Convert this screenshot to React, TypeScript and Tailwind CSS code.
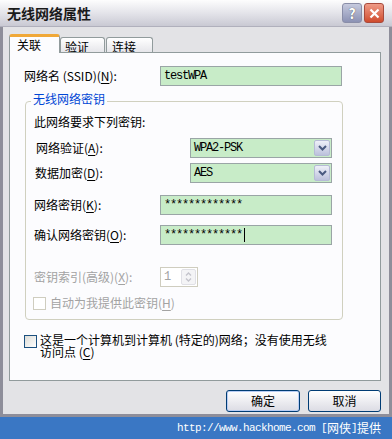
import React from "react";

const cjk = "[font-family:'Noto_Sans_CJK_SC',sans-serif]";
const mono = "[font-family:'Liberation_Mono','Noto_Sans_CJK_SC',monospace] text-[12px] tracking-[-1.2px]";

const Acc = ({ c }: { c: string }) => <span className="underline underline-offset-2">{c}</span>;

const Select = ({ value }: { value: string }) => (
	<div className="flex h-[20px] w-[142px] items-center border border-[#9aa5a6] bg-[#c8ecc8]">
		<span className={`${mono} flex-1 pl-[3px] text-black`}>{value}</span>
		<div className="mr-[1px] flex h-[16px] w-[16px] items-center justify-center rounded-[2px] border border-[#b6bbd6] bg-linear-to-b from-[#eef0f8] to-[#bcc1dc]">
			<svg width="9" height="6" viewBox="0 0 9 6">
				<path d="M1 1l3.5 3.5L8 1" stroke="#4a5a80" strokeWidth="2" fill="none" />
			</svg>
		</div>
	</div>
);

const Field = ({ w, children }: { w: string; children?: React.ReactNode }) => (
	<div className={`flex h-[20px] ${w} items-center border border-[#9aa5a6] bg-[#c8ecc8] pl-[3px]`}>
		<span className={`${mono} text-black`}>{children}</span>
	</div>
);

const Check = ({ disabled }: { disabled?: boolean }) => (
	<div
		className={
			disabled
				? "h-[13px] w-[13px] shrink-0 border border-[#cfcdbf] bg-white"
				: "h-[13px] w-[13px] shrink-0 border border-[#1c5180] bg-linear-to-br from-[#dcdcd7] to-white"
		}
	/>
);

export default function App() {
	return (
		<div className={`flex h-[439px] w-[392px] flex-col bg-[#e3e3e6] text-[12px] leading-[16px] text-black ${cjk}`}>
			<div className="flex h-[417px] flex-col">
				{/* title bar */}
				<div className="flex h-[27px] items-center border-b border-[#b0b0bc] bg-linear-to-b from-[#fdfdfd] via-[#e4e4ea] to-[#c9c9d3] pl-[7px] pr-[8px]">
					<span className="flex-1 text-[14px] font-bold text-[#1a1a1a]">无线网络属性</span>
					<div className="flex h-[20px] w-[20px] items-center justify-center rounded-[3px] border border-[#8a8ea8] bg-linear-to-b from-[#c6cade] to-[#8c92b4] text-[14px] font-bold text-white [text-shadow:0_0_1px_#333]">
						?
					</div>
					<div className="ml-[2px] flex h-[20px] w-[20px] items-center justify-center rounded-[3px] border border-[#a84a3c] bg-linear-to-b from-[#ee9a86] to-[#cf4a2c]">
						<svg width="11" height="11" viewBox="0 0 11 11">
							<path d="M1.5 1.5l8 8M9.5 1.5l-8 8" stroke="white" strokeWidth="2.2" />
						</svg>
					</div>
				</div>

				<div className="flex flex-1 flex-col border-x-[3px] border-b-[3px] border-[#8e8e9a] pt-[7px]">
					{/* tabs */}
					<div className="flex h-[18px] items-end pl-[6px]">
						<div className="relative z-10 -mb-px flex h-[19px] w-[51px] items-center rounded-t-[3px] border-x border-t-[3px] border-x-[#919b9c] border-t-[#f0a838] bg-[#fcfcfe] pl-[7px]">
							关联
						</div>
						<div className="flex h-[15px] w-[45px] items-center rounded-t-[3px] border-x border-t border-[#919b9c] bg-linear-to-b from-white to-[#e6e6ea] pl-[4px] pt-[3px]">
							验证
						</div>
						<div className="ml-[1px] flex h-[15px] w-[47px] items-center rounded-t-[3px] border-x border-t border-[#919b9c] bg-linear-to-b from-white to-[#e6e6ea] pl-[5px] pt-[3px]">
							连接
						</div>
					</div>

					{/* panel */}
					<div className="ml-[6px] mr-[8px] flex h-[329px] flex-col border border-[#919b9c] bg-[#fcfcfe] pl-[14px]">
						<div className="mt-[13px] flex h-[20px] items-center">
							<span className="w-[136px]">
								网络名 (SSID)(<Acc c="N" />):
							</span>
							<Field w="w-[182px]">testWPA</Field>
						</div>

						<div className="relative ml-[1px] mt-[15px] w-[318px] rounded-[4px] border border-[#d0d0bf] pb-[9px] pl-[8px]">
							<span className="absolute left-[5px] top-[-11px] bg-[#fcfcfe] px-[2px] text-[#0046d5]">无线网络密钥</span>
							<div className="mt-[12px] h-[16px]">此网络要求下列密钥:</div>
							<div className="mt-[8px] flex h-[20px] items-center">
								<span className="w-[156px] pl-[2px]">
									网络验证(<Acc c="A" />):
								</span>
								<Select value="WPA2-PSK" />
							</div>
							<div className="mt-[5px] flex h-[20px] items-center">
								<span className="w-[156px] pl-[1px]">
									数据加密(<Acc c="D" />):
								</span>
								<Select value="AES" />
							</div>
							<div className="mt-[12px] flex h-[20px] items-center">
								<span className="w-[126px]">
									网络密钥(<Acc c="K" />):
								</span>
								<Field w="w-[172px]">*************</Field>
							</div>
							<div className="mt-[10px] flex h-[20px] items-center">
								<span className="w-[126px]">
									确认网络密钥(<Acc c="O" />):
								</span>
								<div className="flex h-[20px] w-[172px] items-center border border-[#9aa5a6] bg-[#c8ecc8] pl-[3px]">
									<span className={mono}>*************</span>
									<span className="ml-[2px] h-[14px] w-px bg-black" />
								</div>
							</div>
							<div className="mt-[22px] flex h-[20px] items-center text-[#a3a3a3]">
								<span className="w-[126px]">
									密钥索引(高级)(<Acc c="X" />):
								</span>
								<div className="flex h-[20px] w-[38px] items-center border border-[#cfcdbf] bg-white pl-[3px]">
									<span className={`${mono} flex-1`}>1</span>
									<div className="mr-[1px] flex h-[16px] w-[15px] flex-col items-center justify-center gap-[2px] rounded-[2px] border border-[#e0e0e6] bg-[#f4f4f6]">
										<svg width="7" height="4" viewBox="0 0 7 4">
											<path d="M1 3.5l2.5-2.5L6 3.5" stroke="#c4c4cc" strokeWidth="1.4" fill="none" />
										</svg>
										<svg width="7" height="4" viewBox="0 0 7 4">
											<path d="M1 0.5l2.5 2.5L6 0.5" stroke="#c4c4cc" strokeWidth="1.4" fill="none" />
										</svg>
									</div>
								</div>
							</div>
							<div className="-ml-[1px] mt-[9px] flex h-[14px] items-center gap-[4px] text-[#a3a3a3]">
								<Check disabled />
								<span>
									自动为我提供此密钥(<Acc c="H" />)
								</span>
							</div>
						</div>

						<div className="mt-[15px] flex items-start gap-[3px]">
							<Check />
							<div className="-mt-[1px] flex flex-col whitespace-nowrap">
								<div className="h-[12px] leading-[12px]">这是一个计算机到计算机 (特定的)网络；没有使用无线</div>
								<div className="h-[12px] leading-[12px]">
									访问点 (<Acc c="C" />)
								</div>
							</div>
						</div>
					</div>

					{/* buttons */}
					<div className="mt-[9px] flex justify-end gap-[8px] pr-[8px]">
						<button className="flex h-[22px] w-[74px] items-center justify-center rounded-[3px] border border-[#003c74] bg-linear-to-b from-white to-[#dcdce4] shadow-[inset_0_0_0_1px_#b8cdf4]">
							确定
						</button>
						<button className="flex h-[22px] w-[73px] items-center justify-center rounded-[3px] border border-[#003c74] bg-linear-to-b from-white to-[#dcdce4]">
							取消
						</button>
					</div>
				</div>
			</div>

			{/* footer */}
			<div className="flex h-[22px] items-center justify-end bg-[#3a77c4] pr-[11px] text-white">
				<span className="[font-family:'Liberation_Mono',monospace] text-[11px] tracking-[-0.6px]">http://www.hackhome.com [</span>
				<span className="text-[12px]">网侠</span>
				<span className="[font-family:'Liberation_Mono',monospace] text-[11px] tracking-[-0.6px]">]</span>
				<span className="text-[12px]">提供</span>
			</div>
		</div>
	);
}
